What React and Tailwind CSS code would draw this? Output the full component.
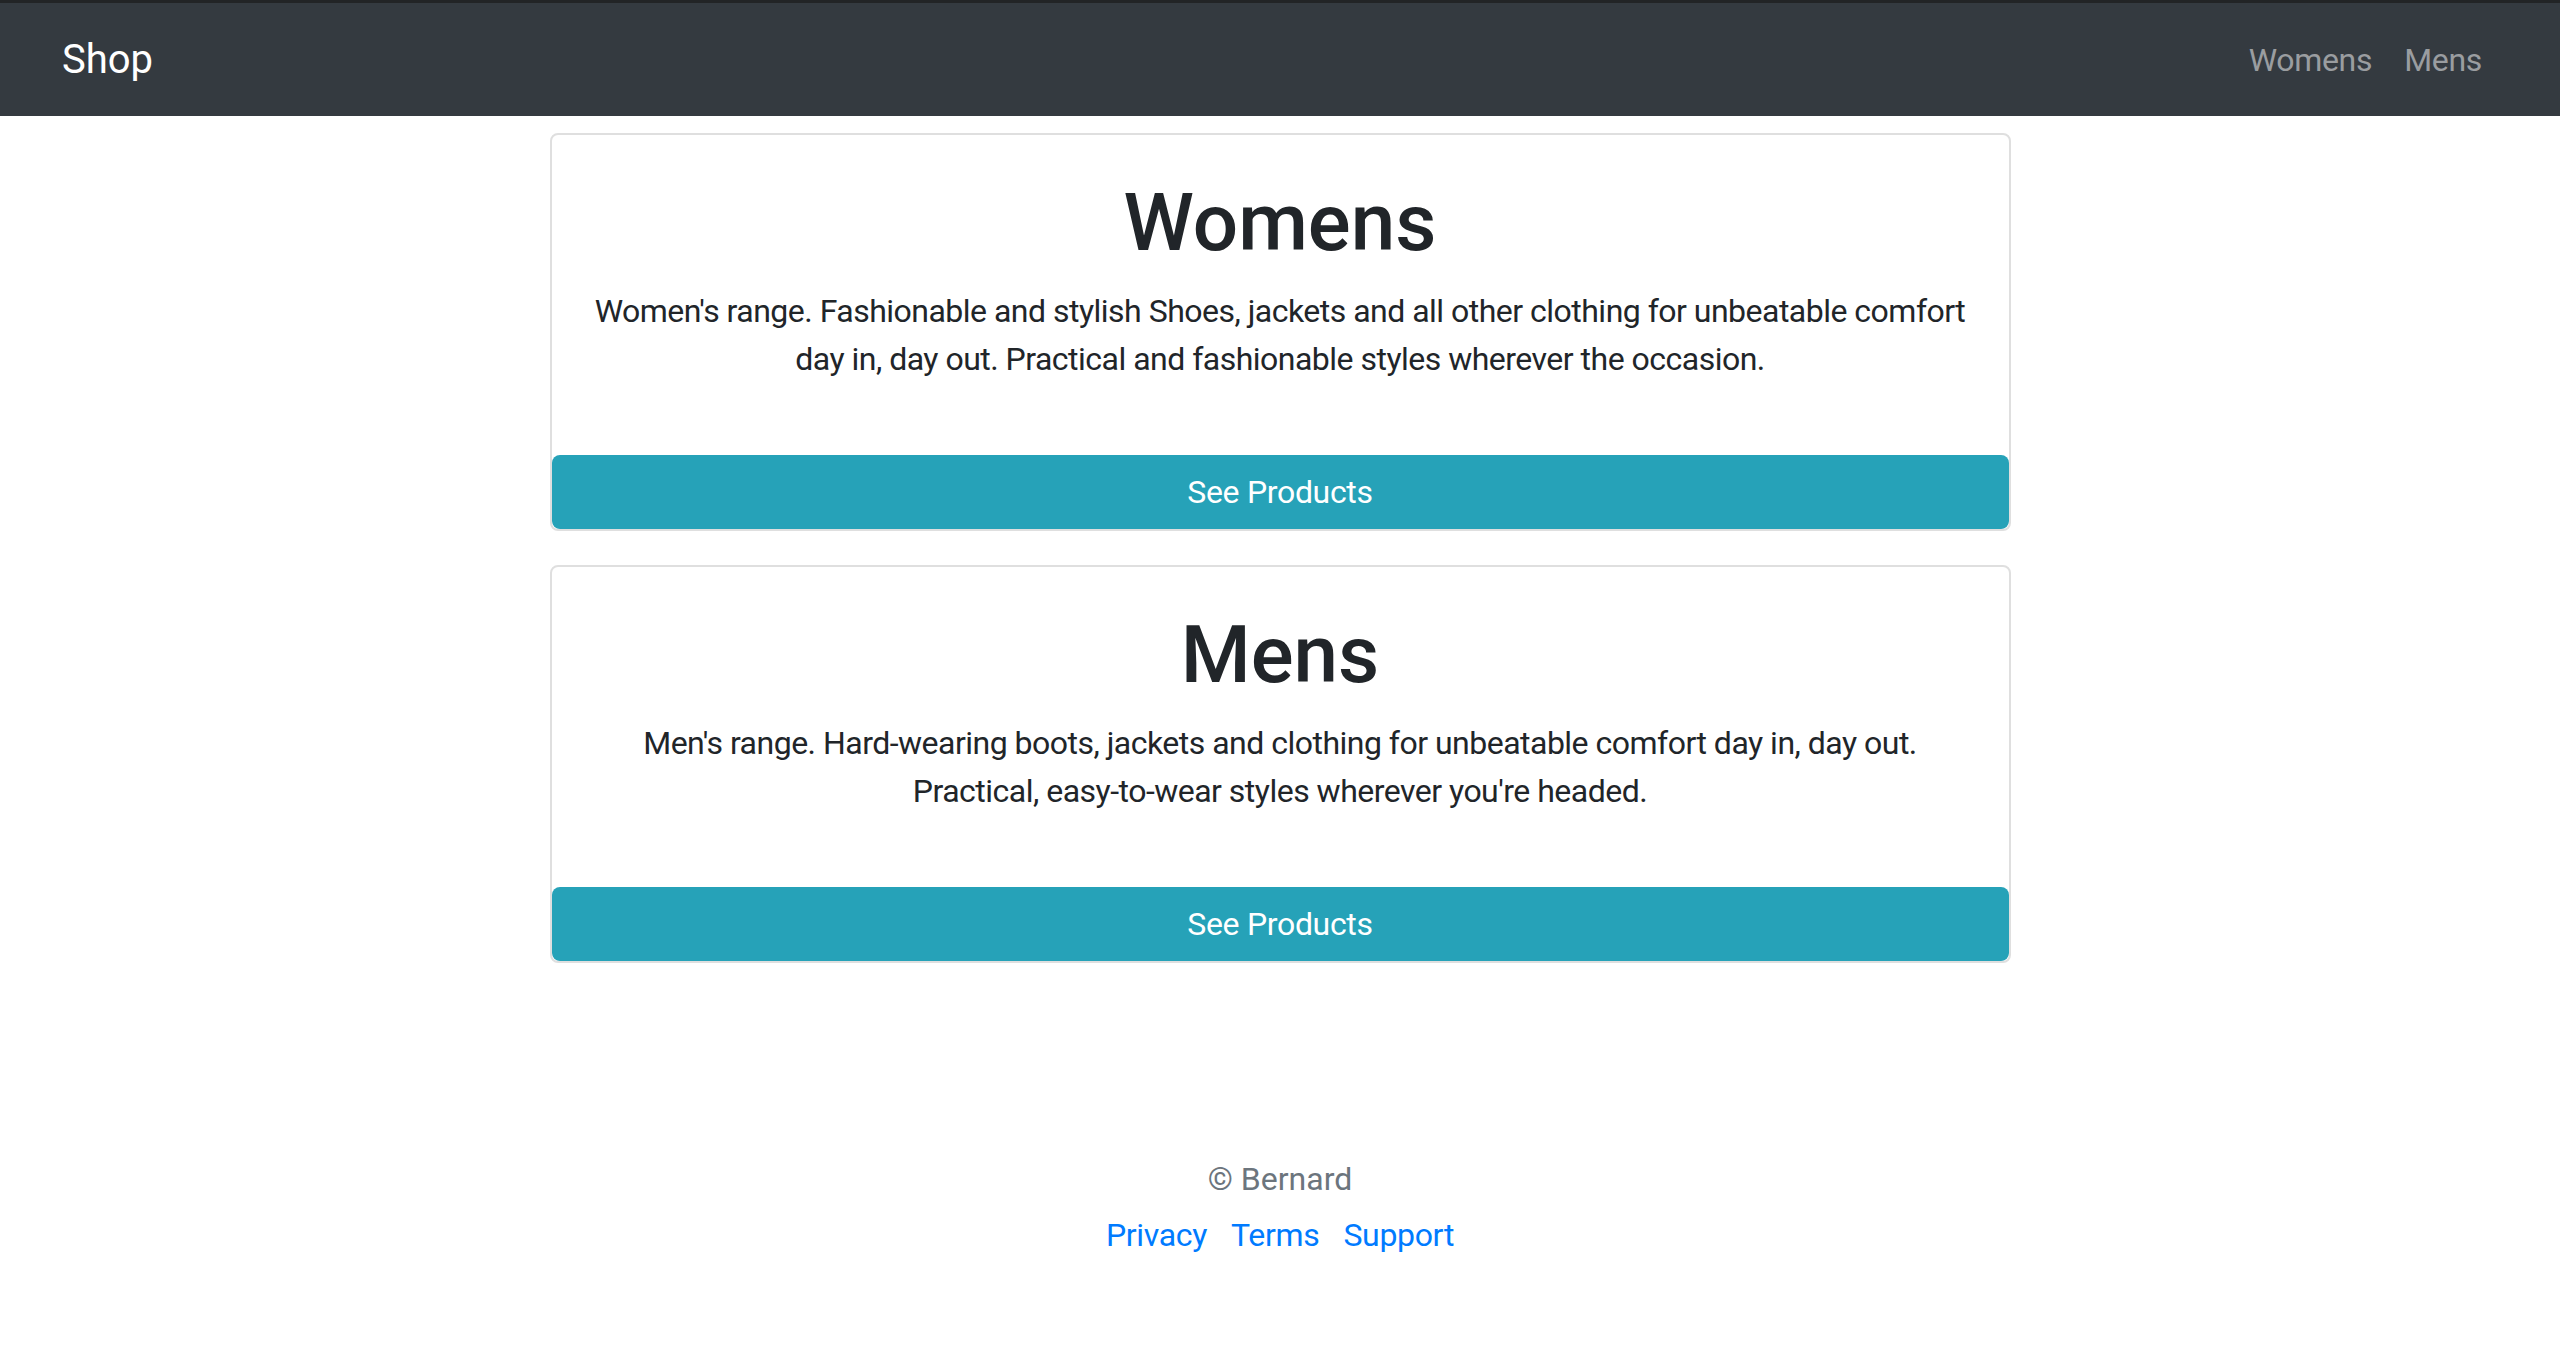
import React from "react";

const categories = [
  {
    title: "Womens",
    text: "Women's range. Fashionable and stylish Shoes, jackets and all other clothing for unbeatable comfort day in, day out. Practical and fashionable styles wherever the occasion.",
  },
  {
    title: "Mens",
    text: "Men's range. Hard-wearing boots, jackets and clothing for unbeatable comfort day in, day out. Practical, easy-to-wear styles wherever you're headed.",
  },
];

const font = { fontFamily: "Roboto, Inter, 'Noto Sans', sans-serif" };

const App = () => {
  return (
    <div className="min-h-screen bg-white text-[#212529]" style={font}>
      <nav className="h-[116px] bg-[#343a40] border-t-[3px] border-[#222426] flex items-center justify-between pl-[62px] pr-[62px]">
        <a href="#" className="text-white text-[40px] leading-none">
          Shop
        </a>
        <div className="flex items-center">
          <a href="#" className="px-4 text-[32px] text-[#9a9da0] tracking-[-0.01em]">
            Womens
          </a>
          <a href="#" className="px-4 text-[32px] text-[#9a9da0] tracking-[-0.01em]">
            Mens
          </a>
        </div>
      </nav>

      <main className="w-[1461px] mx-auto pt-[17px] flex flex-col gap-[34px]">
        {categories.map((c) => (
          <div
            key={c.title}
            className="border-2 border-[#dfdfdf] rounded-lg overflow-hidden flex flex-col">
            <div className="px-10 pt-10 pb-10 text-center">
              <h1 className="text-[80px] leading-[1.2] font-medium mb-4">
                {c.title}
              </h1>
              <p className="text-[32px] leading-[48px] mb-8 tracking-[-0.016em]">
                {c.text}
              </p>
            </div>
            <button className="w-full h-[74px] bg-[#26a2b8] text-white text-[32px] rounded-lg tracking-[-0.01em]">
              See Products
            </button>
          </div>
        ))}
      </main>

      <footer className="mt-[192px] text-center text-[32px] leading-[48px]">
        <p className="text-[#6c757d] mb-2">© Bernard</p>
        <ul className="flex justify-center gap-[24px] tracking-[-0.01em]">
          <li>
            <a href="#" className="text-[#007bff]">Privacy</a>
          </li>
          <li>
            <a href="#" className="text-[#007bff]">Terms</a>
          </li>
          <li>
            <a href="#" className="text-[#007bff]">Support</a>
          </li>
        </ul>
      </footer>
    </div>
  );
};

export default App;
